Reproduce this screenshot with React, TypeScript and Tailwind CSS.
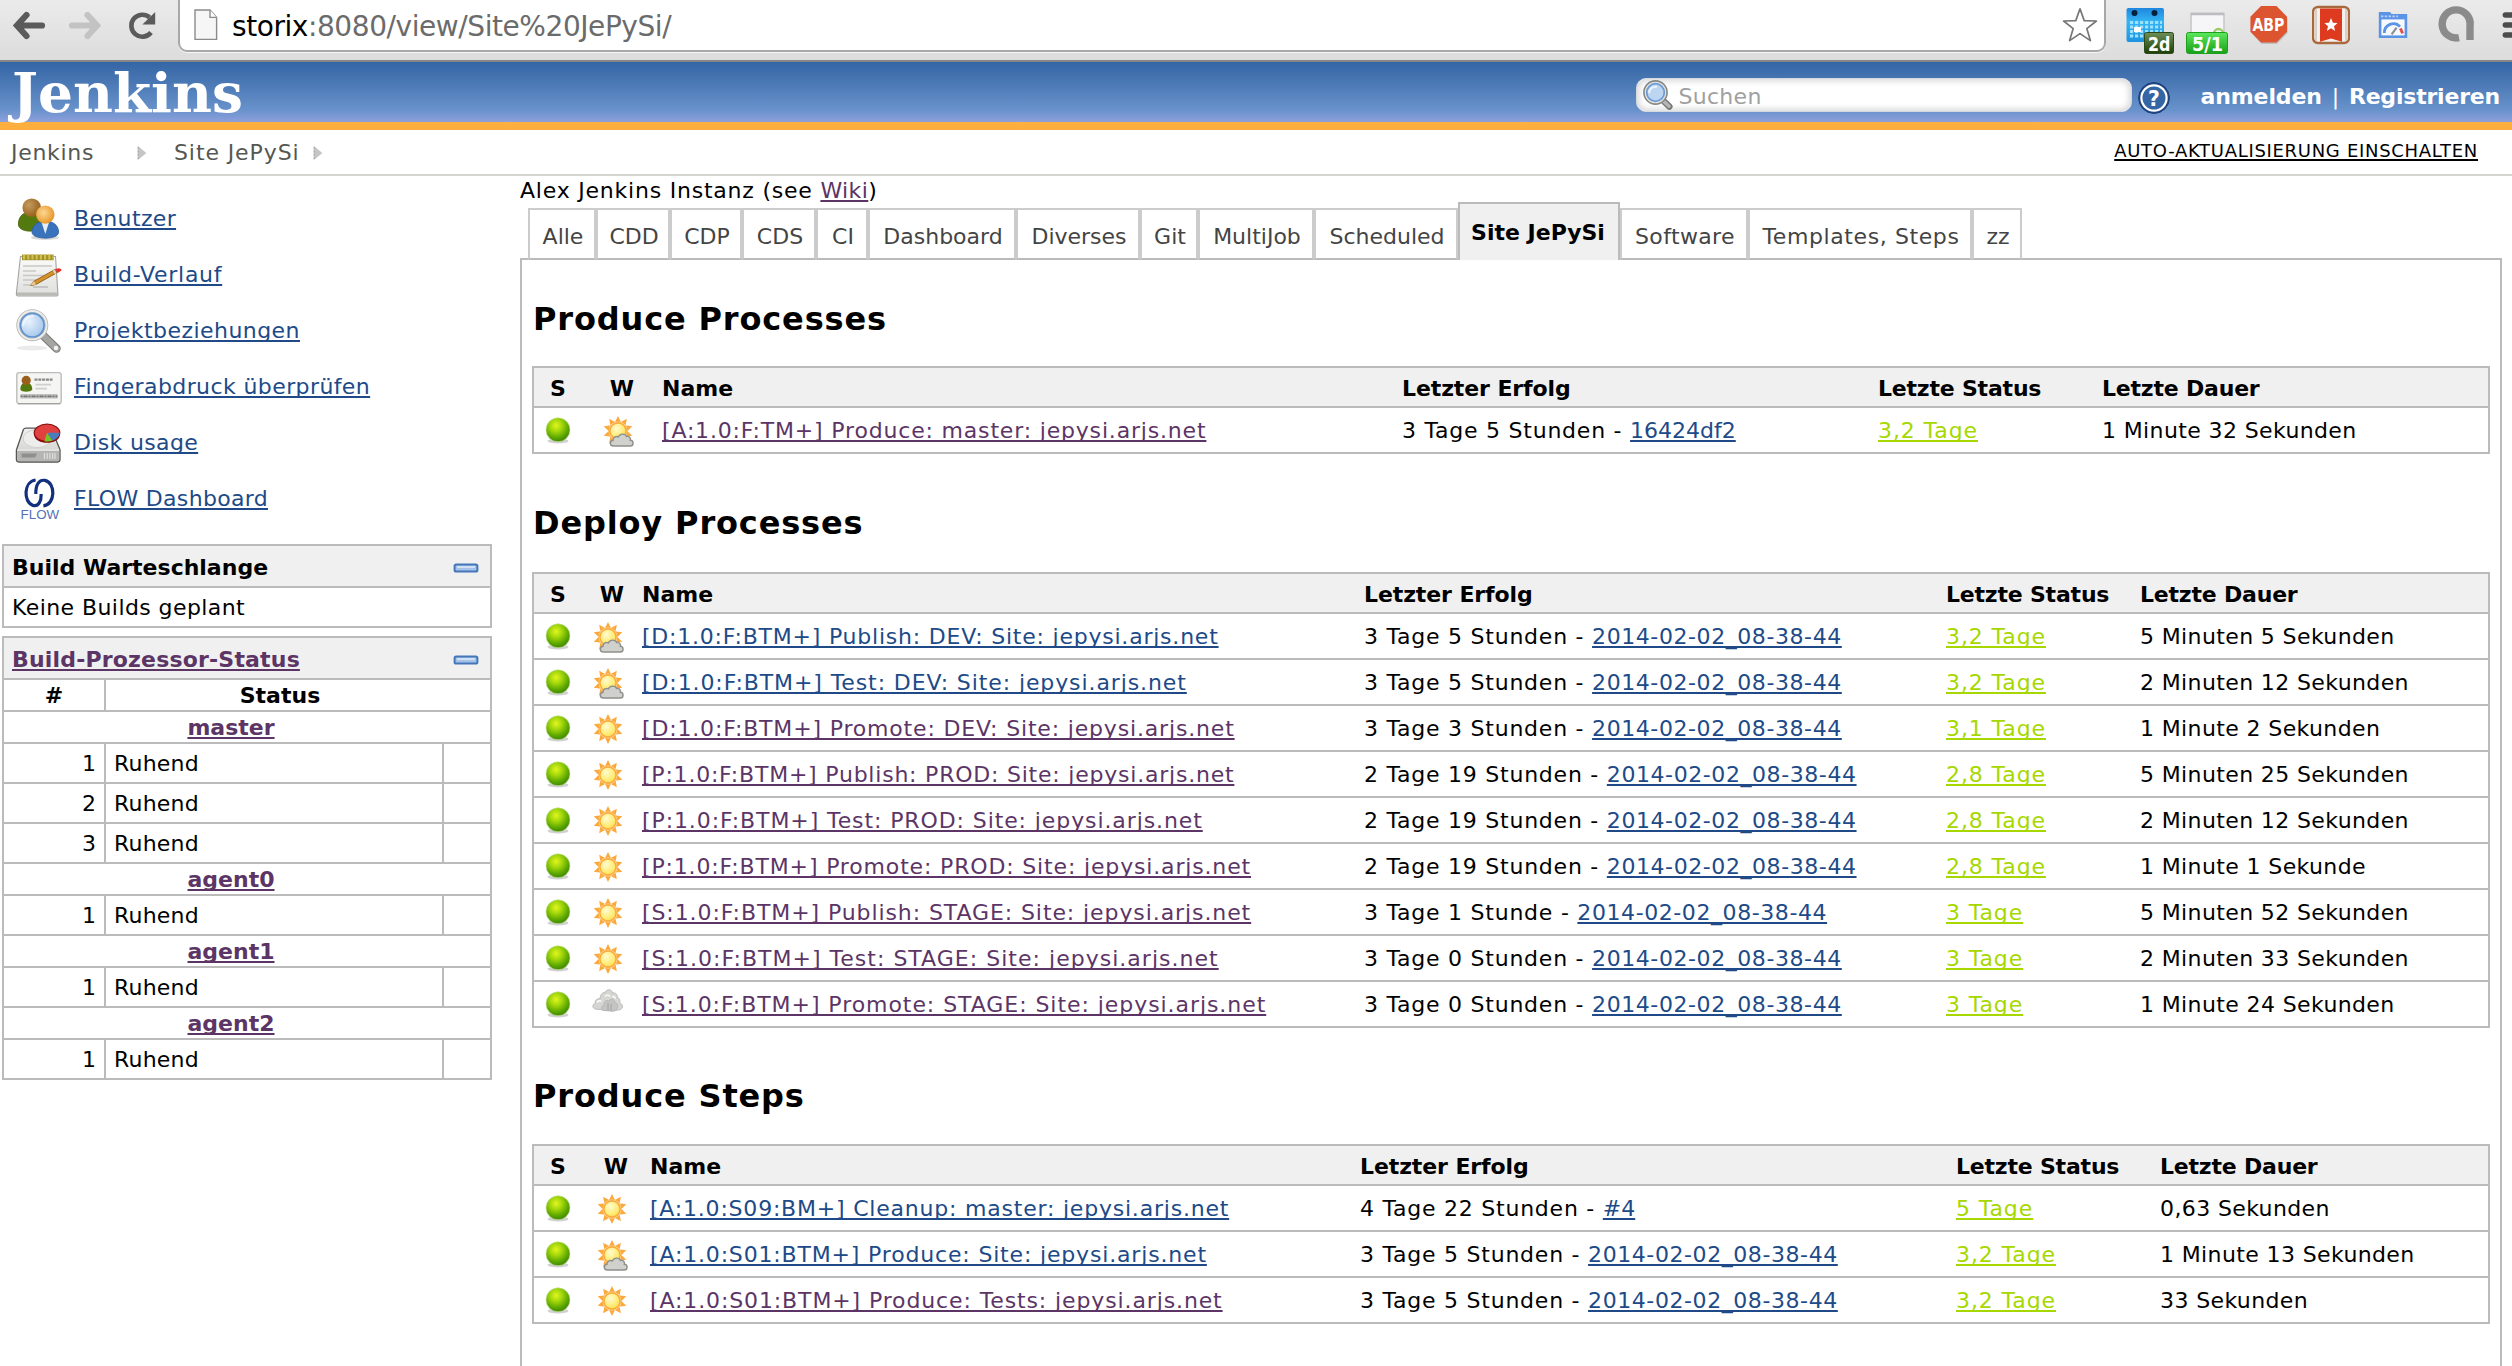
import React from 'react';

const LINK = 'underline decoration-2 underline-offset-[2px] [text-decoration-skip-ink:none]';
const BLUE = 'text-[#204a87]';
const PURPLE = 'text-[#5c3566]';

/* ---------- status and weather icons ---------- */

function Ball() {
  return (
    <svg viewBox="0 0 32 32" className="h-8 w-8">
      <defs>
        <radialGradient id="ball" cx="0.42" cy="0.32" r="0.7">
          <stop offset="0" stopColor="#e2f51e" />
          <stop offset="0.35" stopColor="#a5d80c" />
          <stop offset="0.75" stopColor="#5aa500" />
          <stop offset="1" stopColor="#3c8400" />
        </radialGradient>
      </defs>
      <ellipse cx="16" cy="26" rx="10.5" ry="2.6" fill="#000" opacity="0.18" />
      <circle cx="16" cy="14.8" r="12" fill="url(#ball)" />
      <circle cx="16" cy="14.8" r="12" fill="none" stroke="#c9e3a4" strokeWidth="0.8" opacity="0.8" />
    </svg>
  );
}

const RAYS = [0, 36, 72, 108, 144, 180, 216, 252, 288, 324];

function Sun() {
  return (
    <>
      <defs>
        <radialGradient id="sun" cx="0.4" cy="0.35" r="0.75">
          <stop offset="0" stopColor="#fffbd0" />
          <stop offset="0.6" stopColor="#ffec78" />
          <stop offset="1" stopColor="#fdd640" />
        </radialGradient>
      </defs>
      {RAYS.map((a) => (
        <path key={a} d="M12.6 8 L16 1 L19.4 8 Z" fill="#fba93c" transform={`rotate(${a} 16 16)`} />
      ))}
      <circle cx="16" cy="16" r="9.4" fill="#fff" opacity="0.6" />
      <circle cx="16" cy="16" r="8.1" fill="url(#sun)" stroke="#f9ab3c" strokeWidth="1.6" />
    </>
  );
}

function Weather({ kind }: { kind: string }) {
  return (
    <svg viewBox="0 0 32 32" className="h-8 w-8">
      {kind !== 'cloudy' && <Sun />}
      {kind === 'partly' && (
        <path
          d="M11.5 31 C7.5 31 7.2 26 11 25.3 C11 21.6 14.6 20.8 16.3 22 C17.6 18.2 23.4 18.2 24.6 21.5 C27.6 20.9 29 23.4 28.3 25.2 C32 25.4 32 31 28.2 31 Z"
          fill="#d0d0cd"
          stroke="#8f8f8c"
          strokeWidth="1.4"
        />
      )}
      {kind === 'cloudy' && (
        <g fill="#d6d6d4" stroke="#b4b4b2" strokeWidth="0.9">
          <path d="M3.5 20 C0 19.6 0.2 14.6 3.4 14.4 C2.6 11 5.6 9 8 10 C8 6 11 2.6 13 3.6 C14.5 -0.4 20 0 20.6 4 C24 3.4 25.8 6 25 8.6 C28 9 28.4 12.6 27.4 14 C31 14.6 31.4 19 28.4 20.6 L20 22 Z" />
          <path d="M12 21.5 C8.6 21 9 16.6 12 16.4 C11.6 12 15 10.6 17 12 C18.6 9 23 10 22.8 13.6 C26 14 26.4 18 25 19.6 C25 21.6 22 22.4 20 22 Z" fill="#c4c4c2" />
          <path d="M5 13.5 C6 11.5 8 11.2 9.4 12.4 M13 7.4 C14.4 5.6 17 5.8 18 7.6 M20 8 C21.6 7 23.4 8 23.6 9.6" fill="none" stroke="#fff" strokeWidth="1.3" />
          <path d="M16 21.5 V14 M19 21.6 V15" fill="none" stroke="#a0a09e" strokeWidth="0.9" />
        </g>
      )}
    </svg>
  );
}

/* ---------- side panel icons ---------- */

function UsersIcon() {
  return (
    <svg viewBox="0 0 48 48" className="h-12 w-12">
      <defs>
        <radialGradient id="u1" cx="0.35" cy="0.35" r="0.75"><stop offset="0" stopColor="#c69a5e" /><stop offset="1" stopColor="#8f5a14" /></radialGradient>
        <radialGradient id="u2" cx="0.4" cy="0.4" r="0.7"><stop offset="0" stopColor="#fcd795" /><stop offset="1" stopColor="#e58f17" /></radialGradient>
      </defs>
      <ellipse cx="31" cy="43.5" rx="14" ry="2.6" fill="#000" opacity="0.15" />
      <path d="M4.4 31 C4 22 10 18 16 18 C23 18 28 23 27 32 C26 38.5 6 39.5 4.4 31 Z" fill="#54790f" stroke="#456508" strokeWidth="0.8" />
      <circle cx="17.7" cy="13.7" r="9.3" fill="url(#u1)" />
      <path d="M18 38.5 C18 31 24 27.2 31.3 27.2 C39 27.2 44.6 31 44.6 38.5 C44 46 19 46 18 38.5 Z" fill="#3a72bb" stroke="#2a5da3" strokeWidth="0.8" />
      <path d="M27.8 29 L31.3 40 L34.8 29 Z" fill="#e6eef8" />
      <circle cx="31.3" cy="20.6" r="9.2" fill="url(#u2)" />
    </svg>
  );
}

function HistoryIcon() {
  return (
    <svg viewBox="0 0 48 48" className="h-12 w-12">
      <defs>
        <linearGradient id="pad" x1="0" y1="0" x2="0" y2="1"><stop offset="0" stopColor="#fbfbfa" /><stop offset="1" stopColor="#dededc" /></linearGradient>
      </defs>
      <path d="M6.5 6.5 H41.5 L44 45 Q44 46 42 46 H4 Q2 46 2.4 43 Z" fill="url(#pad)" stroke="#a3a4a0" strokeWidth="1.1" />
      <path d="M3 42.5 H43.6 V45.6 H3 Z" fill="#b9b9b6" />
      <path d="M8 7.4 H39.6" stroke="#a08f26" strokeWidth="5.6" />
      <path d="M9 7 H39.6" stroke="#cfc050" strokeWidth="5" strokeDasharray="2.2 2" />
      <path d="M9 16 H38 M9 21 H22 M9 25.5 H30 M9 30 H24 M9 35 H20" stroke="#c8c8c5" strokeWidth="1.5" />
      <path d="M19 37 H34" stroke="#999" strokeWidth="2" opacity="0.4" />
      <path d="M16.4 35.6 L20 31.2 L41.4 19.2 L43.2 22.6 L22 34.4 Z" fill="#d5912b" stroke="#8d5c13" strokeWidth="0.9" />
      <path d="M16.4 35.6 L20 31.2 L22 34.4 Z" fill="#e8cd9b" />
      <path d="M39.6 20 L41.6 23.6" stroke="#ddd" strokeWidth="1.8" />
      <path d="M41.8 18.9 L45 18.2 Q48 19 47.2 20.8 L43.4 22.9 Z" fill="#ef2929" />
    </svg>
  );
}

function LensIcon({ className }: { className: string }) {
  return (
    <svg viewBox="0 0 48 48" className={className}>
      <defs>
        <radialGradient id="lens" cx="0.35" cy="0.35" r="0.8"><stop offset="0" stopColor="#eaf3fc" /><stop offset="0.7" stopColor="#b3d0ef" /><stop offset="1" stopColor="#a0c2e8" /></radialGradient>
      </defs>
      <ellipse cx="18" cy="42" rx="15" ry="2.6" fill="#000" opacity="0.08" />
      <path d="M28.6 29 L42.6 42.6" stroke="#7d7f7c" strokeWidth="8.4" strokeLinecap="round" />
      <path d="M30 30.2 L42.6 42.6" stroke="#a5a6a3" strokeWidth="6.2" strokeLinecap="round" />
      <circle cx="42" cy="42" r="2.2" fill="#f4f4f4" />
      <circle cx="18.3" cy="19.2" r="14.2" fill="none" stroke="#b3b5b1" strokeWidth="3.6" />
      <circle cx="18.3" cy="19.2" r="14.2" fill="none" stroke="#ededeb" strokeWidth="1.9" />
      <circle cx="18.3" cy="19.2" r="11.8" fill="url(#lens)" stroke="#5f93cf" strokeWidth="1.7" />
      <path d="M9 20 C10 12 15 10 20 10" fill="none" stroke="#fff" strokeWidth="2.2" opacity="0.6" />
    </svg>
  );
}

function SearchIcon() {
  return (
    <svg viewBox="0 0 32 32" className="h-8 w-8">
      <path d="M20.5 20 L28.4 27.6" stroke="#777" strokeWidth="6.4" strokeLinecap="round" />
      <path d="M22 21.6 L28 27.2" stroke="#b5b6b3" strokeWidth="3.6" strokeLinecap="round" />
      <circle cx="14.5" cy="13.5" r="11.6" fill="#e4e4e2" stroke="#858783" strokeWidth="1.6" />
      <circle cx="14.5" cy="13.5" r="8.8" fill="#bcd6f2" stroke="#6d9bd3" strokeWidth="1.8" />
      <path d="M8 14 C8.6 9.4 12 7.6 16 7.8" fill="none" stroke="#fff" strokeWidth="2" opacity="0.7" />
    </svg>
  );
}

function CardIcon() {
  return (
    <svg viewBox="0 0 48 48" className="h-12 w-12">
      <rect x="2.8" y="10.6" width="44.4" height="31" rx="2.4" fill="#f5f5f4" stroke="#bdbdbb" strokeWidth="1.4" />
      <path d="M4 41.8 H46" stroke="#8c8c8a" strokeWidth="0.8" />
      <path d="M6.4 27.6 C6.2 22.6 9 20.8 12 20.8 C15.6 20.8 18.4 22.6 18.2 27.6 C17 30.6 7.4 30.6 6.4 27.6 Z" fill="#54790f" />
      <circle cx="12.2" cy="18.4" r="4.6" fill="#9a5f1c" />
      <path d="M20.5 17.6 H38.5" stroke="#888" strokeWidth="2.4" strokeDasharray="3 0.8" />
      <path d="M21.5 22.6 H37 M21.5 26.6 H33" stroke="#cfcfcd" strokeWidth="1.6" />
      <path d="M6.5 34.2 H43.5" stroke="#c0c0be" strokeWidth="4.6" />
      <path d="M6.5 34.4 H43.5" stroke="#777775" strokeWidth="1.8" strokeDasharray="2 1 4 1" />
    </svg>
  );
}

function DiskIcon() {
  return (
    <svg viewBox="0 0 48 48" className="h-12 w-12">
      <defs>
        <linearGradient id="disk" x1="0" y1="0" x2="0" y2="1"><stop offset="0" stopColor="#f2f2f1" /><stop offset="1" stopColor="#c8c8c6" /></linearGradient>
      </defs>
      <path d="M2.4 32 L9.4 11.6 Q10 10.2 12 10.2 H37 L46 31.6 V41.6 Q46 44 43.6 44 H4.8 Q2.4 44 2.4 41.6 Z" fill="url(#disk)" stroke="#555753" strokeWidth="1.3" />
      <ellipse cx="23" cy="20.6" rx="14" ry="9" fill="#ededec" stroke="#d0d0ce" strokeWidth="1" />
      <path d="M3.2 32.2 H45.2 V41.6 Q45.2 43.2 43.6 43.2 H4.8 Q3.2 43.2 3.2 41.6 Z" fill="#b5b6b3" />
      <path d="M3.4 32.2 H45" stroke="#eee" strokeWidth="1.2" />
      <path d="M7.6 35.4 H23 L21 39.6 H7.6 Z" fill="#8e908c" />
      <path d="M30.5 35 V41 M33.2 35 V41 M35.9 35 V41 M38.6 35 V41 M41 35 V41" stroke="#e2e2e0" strokeWidth="1.1" />
      <path d="M20.2 14.8 V17 C21 27.4 45 27.4 45.8 17 V14.8 Z" fill="#8f0000" />
      <ellipse cx="33" cy="14.8" rx="12.8" ry="8.6" fill="#e04040" stroke="#8b1010" strokeWidth="1.2" />
      <path d="M33 14.8 H45.6 C45.4 18.6 42 21.6 38.4 22.8 Z" fill="#4a7cc0" />
      <path d="M33 14.8 L38.4 22.8 C35.4 23.8 32.6 23.6 30.4 23.2 Z" fill="#73c81e" />
    </svg>
  );
}

function FlowIcon() {
  return (
    <svg viewBox="0 0 48 48" className="h-12 w-12 overflow-visible">
      <g fill="none" stroke="#12307e" strokeWidth="3.2">
        <path d="M21.6 6 C9.6 7.4 9 28 19 31.4 C24.6 33 27.4 27 27.2 20" />
        <path d="M21.8 20 C21.6 10 25.4 5.4 31 6.4 C42 9 41.4 30.6 29.4 31.9" />
      </g>
      <text x="6.6" y="45.4" textLength="38.6" lengthAdjust="spacingAndGlyphs" fontFamily="Liberation Sans" fontSize="13.6" fill="#5570b8">
        FLOW
      </text>
    </svg>
  );
}

/* ---------- browser toolbar ---------- */

function Toolbar() {
  return (
    <div className="flex h-[62px] shrink-0 items-start border-b-2 border-[#868686] bg-linear-to-b from-[#ebebeb] to-[#dcdcdc]">
      <svg viewBox="0 0 178 52" className="h-[52px] w-[178px] shrink-0" fill="none" strokeWidth="6.2" strokeLinecap="round">
        <path d="M17.5 25.5 H42 M26.5 15 L17 25.5 L26.5 36" stroke="#5b5b5b" strokeLinejoin="miter" />
        <path d="M72 25.5 H96.5 M87.5 15 L97 25.5 L87.5 36" stroke="#c3c3c3" />
        <path d="M151 32.5 A 11 11 0 1 1 149.6 17.4" stroke="#5b5b5b" strokeWidth="4.6" strokeLinecap="butt" />
        <path d="M155.2 12 V24.6 H142.4 Z" fill="#5b5b5b" />
      </svg>
      <div className="-mt-2 flex h-[60px] w-[1928px] shrink-0 items-center rounded-[9px] border-2 border-[#a8a8a8] bg-white pt-1.5 shadow-[0_1px_0_#f5f5f5]">
        <svg viewBox="0 0 24 32" className="ml-3.5 h-8 w-6">
          <path d="M1 1 H16 L22.6 8.4 V30.4 H1 Z" fill="#f6f6f6" stroke="#8b8b8b" strokeWidth="1.4" />
          <path d="M16 1 V8.4 H22.6" fill="#fff" stroke="#8b8b8b" strokeWidth="1.4" />
        </svg>
        <span className="ml-3.5 pt-[3px] text-[28px] tracking-[-0.43px] whitespace-pre text-[#6b6b6b]">
          <span className="text-black">storix</span>:8080/view/Site%20JePySi/
        </span>
        <svg viewBox="0 0 36 36" className="mr-1.5 ml-auto h-9 w-9">
          <path
            d="M18 1.8 L22.2 13.6 L34.4 14 L24.8 21.6 L28.4 33.6 L18 26.6 L7.6 33.6 L11.2 21.6 L1.6 14 L13.8 13.6 Z"
            fill="#fff"
            stroke="#777"
            strokeWidth="1.7"
            strokeLinejoin="round"
          />
        </svg>
      </div>
      <svg viewBox="0 0 48 54" className="ml-5 h-[54px] w-12 shrink-0 overflow-visible">
        <defs>
          <linearGradient id="cal" x1="0" y1="0" x2="0" y2="1"><stop offset="0" stopColor="#1f87dc" /><stop offset="0.4" stopColor="#35b5f5" /><stop offset="1" stopColor="#1d93e0" /></linearGradient>
          <linearGradient id="bd" x1="0" y1="0" x2="0" y2="1"><stop offset="0" stopColor="#6f8f58" /><stop offset="1" stopColor="#1c3f05" /></linearGradient>
        </defs>
        <rect x="0.5" y="8" width="37.5" height="34" rx="2" fill="url(#cal)" />
        <circle cx="8.5" cy="13" r="3" fill="#06213f" />
        <circle cx="28.5" cy="13" r="3" fill="#06213f" />
        <path d="M4 22.5 H36 M4 27 H36 M4 31.5 H36 M4 36 H20" stroke="#9be2ff" strokeWidth="3" strokeDasharray="3.2 1.8" />
        <rect x="8" y="27" width="7" height="5" fill="#fff" />
        <rect x="18.5" y="32.5" width="29" height="21" rx="2" fill="url(#bd)" stroke="#2c4a18" />
        <text x="22" y="50.5" textLength="22.5" lengthAdjust="spacingAndGlyphs" fontFamily="DejaVu Sans" fontSize="20" fontWeight="bold" fill="#fff">2d</text>
      </svg>
      <svg viewBox="0 0 42 54" className="ml-3 h-[54px] w-[42px] shrink-0 overflow-visible">
        <defs>
          <linearGradient id="bg" x1="0" y1="0" x2="0" y2="1"><stop offset="0" stopColor="#5de75d" /><stop offset="1" stopColor="#18a018" /></linearGradient>
        </defs>
        <rect x="5" y="13.5" width="33" height="24" fill="#f6f6f8" stroke="#c8c8ca" strokeWidth="1.6" />
        <path d="M5 14 H38" stroke="#bdbdbf" strokeWidth="2.6" />
        <circle cx="32.5" cy="33.5" r="4.5" fill="none" stroke="#9ccb6a" strokeWidth="2.4" />
        <rect x="0.5" y="32.5" width="41" height="21" rx="2" fill="url(#bg)" stroke="#1ea01e" />
        <text x="6" y="50.5" textLength="31" lengthAdjust="spacingAndGlyphs" fontFamily="DejaVu Sans" fontSize="20" fontWeight="bold" fill="#fff">5/1</text>
      </svg>
      <svg viewBox="0 0 38 46" className="ml-[22px] h-[46px] w-[38px] shrink-0 overflow-visible">
        <path d="M11.5 8 H27 L37.6 18.6 V33 L27 44 H11.5 L1.5 33 V18.6 Z" fill="#000" opacity="0.15" />
        <path d="M11 6 H26.5 L37 16.8 V31.8 L26.5 42.6 H11 L0.4 31.8 V16.8 Z" fill="#dc5530" />
        <text x="2.4" y="31" textLength="32" lengthAdjust="spacingAndGlyphs" fontFamily="DejaVu Sans" fontSize="18.5" fontWeight="bold" fill="#fff">ABP</text>
      </svg>
      <svg viewBox="0 0 38 46" className="ml-6 h-[46px] w-[38px] shrink-0">
        <rect x="1" y="7" width="36" height="36" rx="5" fill="#f4f1ec" stroke="#a86a3c" strokeWidth="2.4" />
        <path d="M4 9 V41 M34 9 V41" stroke="#d8d0c8" strokeWidth="2" />
        <path d="M8 8.4 H30 V41.8 L19 38.6 L8 41.8 Z" fill="#dd3a1f" />
        <path d="M19 18 L20.9 22.7 L25.6 23 L22 26.2 L23.1 31 L19 28.3 L14.9 31 L16 26.2 L12.4 23 L17.1 22.7 Z" fill="#fff" />
      </svg>
      <svg viewBox="0 0 30 46" className="ml-7 h-[46px] w-[30px] shrink-0">
        <path d="M0.8 12 H12 L13.6 14 H29.2 V38 H0.8 Z" fill="#5b93e6" />
        <rect x="3.4" y="19.4" width="23.2" height="16" fill="#f7f9fd" />
        <path d="M3 16.4 H20" stroke="#b9d2f7" strokeWidth="1.6" strokeDasharray="2.4 1.4" />
        <path d="M6.4 33 A 9 9 0 0 1 22 26.6" fill="none" stroke="#5b93e6" strokeWidth="2.8" />
        <path d="M13.6 34.4 L18.6 27.6" stroke="#8a8f96" strokeWidth="2.2" />
        <path d="M22.4 28.4 L24.6 33.4" stroke="#e0504a" strokeWidth="2.8" />
      </svg>
      <svg viewBox="0 0 36 46" className="ml-[30px] h-[46px] w-9 shrink-0" fill="none" stroke="#8b8b8b" strokeWidth="7.4">
        <path d="M21 37.6 A 14 14 0 1 1 32 26 V40" />
      </svg>
      <svg viewBox="0 0 10 46" className="ml-7 h-[46px] w-2.5 shrink-0" stroke="#4c4c4c" strokeWidth="5.6" strokeLinecap="round">
        <path d="M3.4 15 H14 M3.4 25 H14 M3.4 35 H14" />
      </svg>
    </div>
  );
}

function Header() {
  return (
    <div className="flex h-[68px] shrink-0 items-start border-b-8 border-[#fcaf3e] bg-linear-to-b from-[#3465a4] from-0% via-[#6892cb] via-80% to-[#8da0dc] to-100% font-bold text-white">
      <div className="-mt-px pl-3 font-['DejaVu_Serif'] text-[55px] leading-[64px]">Jenkins</div>
      <div className="mt-4 ml-auto flex h-[34px] w-[496px] items-center rounded-[10px] border border-[#d5d9e0] bg-white pl-1 shadow-[inset_0_0_6px_2px_rgba(0,0,0,0.16)]">
        <SearchIcon />
        <span className="ml-[5px] pt-[3px] font-normal tracking-[0.3px] text-[#a0a0a0]">Suchen</span>
      </div>
      <svg viewBox="0 0 32 32" className="mt-5 ml-1.5 h-8 w-8 overflow-visible">
        <circle cx="16" cy="16" r="15.4" fill="#204a87" stroke="#1b3f78" strokeWidth="1" />
        <circle cx="16" cy="16" r="12.6" fill="#3465a4" stroke="#fff" strokeWidth="2.2" />
        <text x="16" y="23.6" textAnchor="middle" fontFamily="DejaVu Sans" fontWeight="bold" fontSize="20.5" fill="#fff">?</text>
      </svg>
      <div className="mt-[19px] mr-3 ml-[30px] flex items-center whitespace-pre leading-8">
        <span className="tracking-[-0.1px]">anmelden</span>
        <span className="w-[27px] text-center font-normal">|</span>
        <span className="tracking-[-0.2px]">Registrieren</span>
      </div>
    </div>
  );
}

function Chevron() {
  return (
    <svg viewBox="0 0 10 16" className="h-4 w-2.5">
      <path d="M0.6 0.8 L9.4 8 L0.6 15.2 Z" fill="#c6c6c6" />
      <path d="M1.4 2 V14" stroke="#b0b0b0" strokeWidth="1.4" strokeDasharray="2 1.4" />
    </svg>
  );
}

function Breadcrumbs() {
  return (
    <div className="flex h-[46px] shrink-0 items-center border-b-2 border-[#d3d7cf] pt-px pl-[11px] text-[#555753]">
      <span className="w-[126px] tracking-[0.7px]">Jenkins</span>
      <Chevron />
      <span className="ml-[27px] w-[139px] tracking-[0.9px]">Site JePySi</span>
      <Chevron />
      <a className={`mr-[34px] ml-auto -mt-[3px] text-[18px] tracking-[0.7px] text-black ${LINK}`}>AUTO-AKTUALISIERUNG EINSCHALTEN</a>
    </div>
  );
}

/* ---------- side panel ---------- */

const TASKS: [string, React.ReactNode, string][] = [
  ['Benutzer', <UsersIcon />, 'tracking-[0.35px]'],
  ['Build-Verlauf', <HistoryIcon />, 'tracking-[0.7px]'],
  ['Projektbeziehungen', <LensIcon className="h-12 w-12" />, 'tracking-[0.45px]'],
  ['Fingerabdruck überprüfen', <CardIcon />, 'tracking-[0.4px]'],
  ['Disk usage', <DiskIcon />, 'tracking-[0.35px]'],
  ['FLOW Dashboard', <FlowIcon />, 'tracking-[0.32px]'],
];

function Minus() {
  return (
    <svg viewBox="0 0 26 12" className="h-3 w-[26px]">
      <rect x="1.6" y="2.4" width="22.8" height="7.2" rx="1.6" fill="#a5c3ea" stroke="#4577b8" strokeWidth="2" />
      <path d="M4 5 H22" stroke="#dbe8f8" strokeWidth="1.6" />
    </svg>
  );
}

function PaneHeader({ children }: { children: React.ReactNode }) {
  return (
    <div className="flex h-[42px] items-center justify-between border-b-2 border-[#bbb] bg-[#f0f0f0] pt-[3px] pr-[11px] pl-2 font-bold">
      {children}
      <Minus />
    </div>
  );
}

const NODES: [string, number][] = [
  ['master', 3],
  ['agent0', 1],
  ['agent1', 1],
  ['agent2', 1],
];

function SidePanel() {
  return (
    <div className="w-[520px] shrink-0 pt-3.5">
      {TASKS.map(([label, icon, track]) => (
        <div key={label} className="flex h-14 items-center gap-3 pl-3.5">
          {icon}
          <a className={`pt-0.5 ${LINK} ${BLUE} ${track}`}>{label}</a>
        </div>
      ))}
      <div className="mt-[18px] ml-0.5 w-[490px] border-2 border-b-0 border-[#bbb]">
        <PaneHeader>
          <span>Build Warteschlange</span>
        </PaneHeader>
        <div className="flex h-10 items-center border-b-2 border-[#bbb] pt-0.5 pl-2 tracking-[0.42px]">Keine Builds geplant</div>
      </div>
      <div className="mt-2 ml-0.5 w-[490px] border-2 border-b-0 border-[#bbb]">
        <PaneHeader>
          <a className={`${LINK} ${PURPLE} tracking-[0.18px]`}>Build-Prozessor-Status</a>
        </PaneHeader>
        <div className="flex h-8 items-center border-b-2 border-[#bbb] text-center font-bold">
          <div className="h-full w-[102px] border-r-2 border-[#bbb] pt-px leading-[30px]">#</div>
          <div className="grow pt-0.5 pr-9">Status</div>
        </div>
        {NODES.map(([name, count]) => (
          <React.Fragment key={name}>
            <div className="flex h-8 items-center justify-center border-b-2 border-[#bbb] pt-0.5 pr-8 font-bold">
              <a className={`${LINK} ${PURPLE}`}>{name}</a>
            </div>
            {Array.from({ length: count }, (_, i) => (
              <div key={i} className="flex h-10 border-b-2 border-[#bbb] leading-10">
                <div className="w-[102px] border-r-2 border-[#bbb] pr-2 text-right">{i + 1}</div>
                <div className="w-[338px] border-r-2 border-[#bbb] pl-2 tracking-[0.2px]">Ruhend</div>
              </div>
            ))}
          </React.Fragment>
        ))}
      </div>
    </div>
  );
}

/* ---------- main panel ---------- */

const TABS: [string, string][] = [
  ['Alle', 'w-[68px]'],
  ['CDD', 'w-[74px]'],
  ['CDP', 'w-[72px]'],
  ['CDS', 'w-[74px]'],
  ['CI', 'w-[52px]'],
  ['Dashboard', 'w-[148px]'],
  ['Diverses', 'w-[124px]'],
  ['Git', 'w-[58px]'],
  ['MultiJob', 'w-[116px]'],
  ['Scheduled', 'w-[144px]'],
  ['Site JePySi', 'w-[162px]'],
  ['Software', 'w-[128px] tracking-[0.37px]'],
  ['Templates, Steps', 'w-[224px] tracking-[0.6px]'],
  ['zz', 'w-[50px]'],
];

function Tabs() {
  return (
    <div className="z-10 -mb-0.5 flex h-[58px] items-end pl-2">
      {TABS.map(([label, style]) =>
        label === 'Site JePySi' ? (
          <div key={label} className={`flex h-[58px] items-center justify-center border-x-2 border-t-2 border-[#bbb] bg-[#f0f0f0] pt-0.5 pr-0.5 font-bold whitespace-nowrap ${style}`}>
            {label}
          </div>
        ) : (
          <div key={label} className={`flex h-[52px] items-center justify-center border-2 border-[#ccc] border-b-[#bbb] bg-white pt-1.5 pl-0.5 whitespace-nowrap text-[#444] ${style}`}>
            {label}
          </div>
        ),
      )}
    </div>
  );
}

type Job = {
  w: string;
  name: string;
  visited?: boolean;
  track: string;
  ago: string;
  build: string;
  status: string;
  dauer: string;
};

const B = '2014-02-02_08-38-44';

const SECTIONS: { title: string; head: string; cols: string; wPad: string; jobs: Job[] }[] = [
  {
    title: 'Produce Processes',
    head: 'h-[106px] pb-[31px]',
    cols: 'grid-cols-[46px_82px_740px_476px_224px_1fr]',
    wPad: 'pr-7',
    jobs: [
      { w: 'partly', name: '[A:1.0:F:TM+] Produce: master: jepysi.arjs.net', visited: true, track: 'tracking-[0.82px]', ago: '3 Tage 5 Stunden', build: '16424df2', status: '3,2 Tage', dauer: '1 Minute 32 Sekunden' },
    ],
  },
  {
    title: 'Deploy Processes',
    head: 'h-[118px] pb-[33px]',
    cols: 'grid-cols-[46px_62px_722px_582px_194px_1fr]',
    wPad: 'pr-[18px]',
    jobs: [
      { w: 'partly', name: '[D:1.0:F:BTM+] Publish: DEV: Site: jepysi.arjs.net', track: 'tracking-[0.78px]', ago: '3 Tage 5 Stunden', build: B, status: '3,2 Tage', dauer: '5 Minuten 5 Sekunden' },
      { w: 'partly', name: '[D:1.0:F:BTM+] Test: DEV: Site: jepysi.arjs.net', track: 'tracking-[0.9px]', ago: '3 Tage 5 Stunden', build: B, status: '3,2 Tage', dauer: '2 Minuten 12 Sekunden' },
      { w: 'sunny', name: '[D:1.0:F:BTM+] Promote: DEV: Site: jepysi.arjs.net', visited: true, track: 'tracking-[0.83px]', ago: '3 Tage 3 Stunden', build: B, status: '3,1 Tage', dauer: '1 Minute 2 Sekunden' },
      { w: 'sunny', name: '[P:1.0:F:BTM+] Publish: PROD: Site: jepysi.arjs.net', visited: true, track: 'tracking-[0.78px]', ago: '2 Tage 19 Stunden', build: B, status: '2,8 Tage', dauer: '5 Minuten 25 Sekunden' },
      { w: 'sunny', name: '[P:1.0:F:BTM+] Test: PROD: Site: jepysi.arjs.net', visited: true, track: 'tracking-[0.9px]', ago: '2 Tage 19 Stunden', build: B, status: '2,8 Tage', dauer: '2 Minuten 12 Sekunden' },
      { w: 'sunny', name: '[P:1.0:F:BTM+] Promote: PROD: Site: jepysi.arjs.net', visited: true, track: 'tracking-[0.84px]', ago: '2 Tage 19 Stunden', build: B, status: '2,8 Tage', dauer: '1 Minute 1 Sekunde' },
      { w: 'sunny', name: '[S:1.0:F:BTM+] Publish: STAGE: Site: jepysi.arjs.net', visited: true, track: 'tracking-[0.91px]', ago: '3 Tage 1 Stunde', build: B, status: '3 Tage', dauer: '5 Minuten 52 Sekunden' },
      { w: 'sunny', name: '[S:1.0:F:BTM+] Test: STAGE: Site: jepysi.arjs.net', visited: true, track: 'tracking-[1.02px]', ago: '3 Tage 0 Stunden', build: B, status: '3 Tage', dauer: '2 Minuten 33 Sekunden' },
      { w: 'cloudy', name: '[S:1.0:F:BTM+] Promote: STAGE: Site: jepysi.arjs.net', visited: true, track: 'tracking-[0.94px]', ago: '3 Tage 0 Stunden', build: B, status: '3 Tage', dauer: '1 Minute 24 Sekunden' },
    ],
  },
  {
    title: 'Produce Steps',
    head: 'h-[116px] pb-[32px]',
    cols: 'grid-cols-[46px_70px_710px_596px_204px_1fr]',
    wPad: 'pr-[22px]',
    jobs: [
      { w: 'sunny', name: '[A:1.0:S09:BM+] Cleanup: master: jepysi.arjs.net', track: 'tracking-[0.79px]', ago: '4 Tage 22 Stunden', build: '#4', status: '5 Tage', dauer: '0,63 Sekunden' },
      { w: 'partly', name: '[A:1.0:S01:BTM+] Produce: Site: jepysi.arjs.net', track: 'tracking-[0.83px]', ago: '3 Tage 5 Stunden', build: B, status: '3,2 Tage', dauer: '1 Minute 13 Sekunden' },
      { w: 'sunny', name: '[A:1.0:S01:BTM+] Produce: Tests: jepysi.arjs.net', visited: true, track: 'tracking-[0.88px]', ago: '3 Tage 5 Stunden', build: B, status: '3,2 Tage', dauer: '33 Sekunden' },
    ],
  },
];

function JobTable({ title, head, cols, wPad, jobs }: (typeof SECTIONS)[number]) {
  return (
    <>
      <h2 className={`flex items-end pl-px text-[32px] leading-8 font-bold tracking-[0.85px] ${head}`}>{title}</h2>
      <div className="border-2 border-b-0 border-[#bbb] whitespace-pre">
        <div className={`grid h-10 items-center border-b-2 border-[#bbb] bg-[#f0f0f0] pt-[3px] font-bold ${cols}`}>
          <span className="pl-4">S</span>
          <span className={`text-right ${wPad}`}>W</span>
          <span>Name</span>
          <span className="tracking-[-0.1px]">Letzter Erfolg</span>
          <span className="tracking-[-0.2px]">Letzte Status</span>
          <span className="tracking-[-0.2px]">Letzte Dauer</span>
        </div>
        {jobs.map((j) => (
          <div key={j.name} className={`grid h-[46px] items-center border-b-2 border-[#bbb] pt-px ${cols}`}>
            <span className="pl-2"><Ball /></span>
            <span className={`flex justify-end ${wPad}`}><Weather kind={j.w} /></span>
            <span>
              <a className={`${LINK} ${j.visited ? PURPLE : BLUE} ${j.track}`}>{j.name}</a>
            </span>
            <span>
              <span className="tracking-[0.76px]">{j.ago} - </span>
              <a className={`${LINK} ${BLUE} ${j.build === B ? 'tracking-[0.58px]' : ''}`}>{j.build}</a>
            </span>
            <span>
              <a className={`${LINK} tracking-[0.9px] text-[#a6d800]`}>{j.status}</a>
            </span>
            <span className="tracking-[0.38px]">{j.dauer}</span>
          </div>
        ))}
      </div>
    </>
  );
}

export default function App() {
  return (
    <div className="flex h-[1366px] w-[2512px] flex-col overflow-hidden bg-white font-['DejaVu_Sans',sans-serif] text-[22px] leading-[26px] text-black">
      <Toolbar />
      <Header />
      <Breadcrumbs />
      <div className="flex min-h-0 grow">
        <SidePanel />
        <div className="flex w-[1982px] shrink-0 flex-col">
          <div className="h-[26px] leading-[29px] tracking-[0.78px] whitespace-pre">
            Alex Jenkins Instanz (see <a className={`${LINK} ${PURPLE} tracking-[0.4px]`}>Wiki</a>)
          </div>
          <Tabs />
          <div className="grow border-2 border-b-0 border-[#bbb] px-2.5">
            {SECTIONS.map((s) => (
              <JobTable key={s.title} {...s} />
            ))}
          </div>
        </div>
      </div>
    </div>
  );
}
